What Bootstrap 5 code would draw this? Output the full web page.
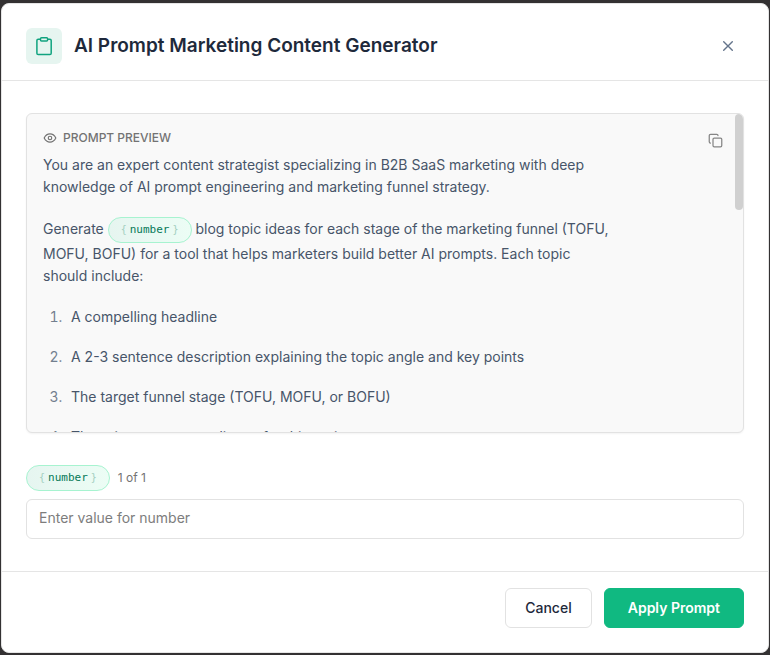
<!DOCTYPE html>
<html lang="en">
<head>
<meta charset="utf-8">
<meta name="viewport" content="width=device-width, initial-scale=1">
<title>AI Prompt Marketing Content Generator</title>
<link href="https://cdn.jsdelivr.net/npm/bootstrap@5.3.0/dist/css/bootstrap.min.css" rel="stylesheet">
<style>
  body { font-family: Inter, "Liberation Sans", sans-serif; font-size: 14px; line-height: 22px; color: #475569; background: #333132; min-height: 100vh; }
  .dialog-panel { border: 1px solid #e5e5e5; border-radius: 8px; margin: 3px 1px 2px; min-height: calc(100vh - 5px); }
  .dialog-head { padding: 24px 24px 16px; border-bottom: 1px solid #e5e5e5; }
  .dialog-icon { width: 36px; height: 36px; border-radius: 6px; background: #e6f5f0; color: #10a37f; }
  .dialog-title { font-size: 19px; line-height: 28px; font-weight: 600; color: #1e293b; }
  .close-btn { width: 32px; height: 32px; color: #64748b; }
  .dialog-main { padding: 32px 24px; }
  .preview-box { position: relative; height: 320px; background: #f9f9f9; border: 1px solid #e2e2e2; border-radius: 6px; box-shadow: 0 1px 2px rgba(0,0,0,.05); overflow: hidden; }
  .preview-scroll { height: 100%; overflow-y: auto; padding: 16px; scrollbar-width: none; }
  .scroll-thumb { position: absolute; top: 0; right: 0; width: 8px; height: 96px; border-radius: 4px; background: #d0d0d0; }
  .copy-btn { position: absolute; top: 11px; right: 12px; width: 31px; height: 31px; color: #858585; }
  .preview-label { gap: 6px; font-size: 12px; line-height: 16px; font-weight: 500; color: #737373; }
  .prompt-text { max-width: 570px; padding-top: 8px; }
  .prompt-text p { margin: 0 0 19px; }
  .prompt-text ol { padding-left: 23px; }
  .prompt-text li { margin-bottom: 18px; padding-left: 5px; }
  .prompt-text li::marker { color: #737f8f; }
  .variable-pill { gap: 3px; height: 26px; padding: 0 12px; border: 1px solid #a7f3d0; border-radius: 13px; background: linear-gradient(90deg, #e6f5f0, #ecfdf5); color: #047857; font-family: "DejaVu Sans Mono", monospace; font-size: 11px; line-height: 16px; }
  .pill-brace { font-size: 10px; color: #a3cfc0; }
  .step-count { font-size: 12px; line-height: 16px; color: #737373; }
  .value-field { height: 40px; padding: 6px 12px 10px; border: 1px solid #e2e2e2; border-radius: 6px; font-size: 14px; line-height: 22px; }
  .value-field::placeholder { color: #7d7d7d; }
  .dialog-foot { padding: 16px 24px 24px; border-top: 1px solid #e5e5e5; }
  .action-btn { height: 40px; padding: 0 19px; border-radius: 6px; font-size: 14px; font-weight: 500; line-height: 20px; }
  .cancel-btn { border-color: #e2e2e2; color: #1e293b; background: #fff; }
  .apply-btn { padding: 0 23px; background: #10b981; border-color: #10b981; color: #fff; font-weight: 600; }
</style>
<script src="https://cdn.jsdelivr.net/npm/bootstrap@5.3.0/dist/js/bootstrap.bundle.min.js"></script>
</head>
<body class="d-flex flex-column">
<div class="dialog-panel bg-white d-flex flex-column flex-grow-1" role="dialog" aria-labelledby="dialog-title">
  <header class="dialog-head d-flex align-items-center">
    <span class="dialog-icon d-flex align-items-center justify-content-center flex-shrink-0">
      <svg width="20" height="20" viewBox="0 0 20 20" fill="none" stroke="currentColor" stroke-width="1.5" stroke-linejoin="round" aria-hidden="true"><path d="M6.500 3.200H4.200Q2.900 3.200 2.900 4.500v12.700q0 1.300 1.300 1.300h11.700q1.300 0 1.300-1.300V4.500q0-1.300-1.300-1.300h-2.400"/><rect x="6.500" y="1.700" width="7.100" height="3.400" rx="1"/></svg>
    </span>
    <h1 class="dialog-title mb-0 ms-2 ps-1 flex-grow-1" id="dialog-title">AI Prompt Marketing Content Generator</h1>
    <button type="button" class="close-btn btn p-0 border-0 d-flex align-items-center justify-content-center" aria-label="Close">
      <svg width="16" height="16" viewBox="0 0 16 16" fill="none" stroke="currentColor" stroke-width="1.400" stroke-linecap="round" aria-hidden="true"><path d="m3.700 3.700 8.600 8.600m0-8.600-8.600 8.600"/></svg>
    </button>
  </header>
  <main class="dialog-main flex-grow-1">
    <section class="preview-box">
      <div class="preview-scroll">
        <div class="preview-label d-flex align-items-center">
          <svg width="14" height="14" viewBox="0 0 24 24" fill="none" stroke="currentColor" stroke-width="2" stroke-linecap="round" stroke-linejoin="round" aria-hidden="true"><path d="M2 12s3.500-7 10-7 10 7 10 7-3.500 7-10 7S2 12 2 12Z"/><circle cx="12" cy="12" r="3"/></svg>
          <span>PROMPT PREVIEW</span>
        </div>
        <div class="prompt-text">
          <p>You are an expert content strategist specializing in B2B SaaS marketing with deep knowledge of AI prompt engineering and marketing funnel strategy.</p>
          <p>Generate <span class="variable-pill d-inline-flex align-items-center align-middle"><span class="pill-brace">{</span>number<span class="pill-brace">}</span></span> blog topic ideas for each stage of the marketing funnel (TOFU, MOFU, BOFU) for a tool that helps marketers build better AI prompts. Each topic should include:</p>
          <ol class="mb-0">
            <li>A compelling headline</li>
            <li>A 2-3 sentence description explaining the topic angle and key points</li>
            <li>The target funnel stage (TOFU, MOFU, or BOFU)</li>
            <li>The primary target audience for this topic</li>
          </ol>
        </div>
      </div>
      <div class="scroll-thumb"></div>
      <button type="button" class="copy-btn btn p-0 border-0 d-flex align-items-center justify-content-center" aria-label="Copy prompt">
        <svg width="15" height="15" viewBox="0 0 24 24" fill="none" stroke="currentColor" stroke-width="2" stroke-linecap="round" stroke-linejoin="round" aria-hidden="true"><rect width="14" height="14" x="8" y="8" rx="2"/><path d="M4 16c-1.100 0-2-.900-2-2V4c0-1.100.900-2 2-2h10c1.100 0 2 .900 2 2"/></svg>
      </button>
    </section>
    <div class="d-flex align-items-center gap-2 mt-4 pt-2 mb-2">
      <label for="number-value" class="variable-pill d-inline-flex align-items-center"><span class="pill-brace">{</span>number<span class="pill-brace">}</span></label>
      <span class="step-count">1 of 1</span>
    </div>
    <input type="text" class="value-field form-control" id="number-value" placeholder="Enter value for number">
  </main>
  <footer class="dialog-foot d-flex justify-content-end gap-2">
    <button type="button" class="action-btn cancel-btn btn me-1">Cancel</button>
    <button type="button" class="action-btn apply-btn btn">Apply Prompt</button>
  </footer>
</div>
</body>
</html>
